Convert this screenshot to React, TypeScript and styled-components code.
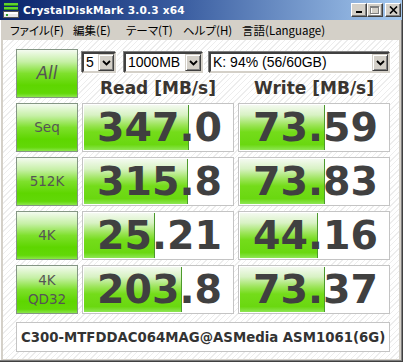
import React from 'react';
import styled, { createGlobalStyle } from 'styled-components';

const GlobalStyle = createGlobalStyle`
  html, body { margin: 0; padding: 0; background: #fff; }
  body { font-family: "DejaVu Sans", sans-serif; }
`;

const Window = styled.div`
  width: 403px;
  height: 362px;
  box-sizing: border-box;
  display: flex;
  flex-direction: column;
  background: #d4d0c8;
  border-right: 1px solid #404040;
  border-bottom: 1px solid #404040;
  box-shadow: inset -1px -1px 0 #808080, inset 1px 0 0 #fff;
`;

const TitleBar = styled.div`
  height: 20px;
  display: flex;
  align-items: center;
  padding: 0 1px 0 3px;
  background: linear-gradient(to right, #0a246a 0%, #3a5da0 45%, #a6caf0 100%);
`;

const TitleText = styled.span`
  flex: 1;
  margin-left: 4px;
  color: #fff;
  font: bold 10.6px "DejaVu Sans", sans-serif;
  letter-spacing: 0.2px;
  white-space: nowrap;
`;

const CaptionButton = styled.div<{ $gap?: number }>`
  width: 16px;
  height: 14px;
  box-sizing: border-box;
  margin-left: ${p => p.$gap ?? 0}px;
  background: #d4d0c8;
  border: 1px solid;
  border-color: #fff #404040 #404040 #fff;
  box-shadow: inset -1px -1px 0 #808080;
  display: flex;
  align-items: center;
  justify-content: center;
`;

const MenuBar = styled.div`
  height: 20px;
  display: flex;
  align-items: center;
  padding-left: 10px;
  font: 11.5px "Noto Sans CJK JP", sans-serif;
  font-feature-settings: "palt";
  color: #000;
`;

const MenuItem = styled.span<{ $w?: number }>`
  width: ${p => (p.$w ? `${p.$w}px` : 'auto')};
  white-space: nowrap;
`;

const Body = styled.div`
  flex: 1;
  margin: 0 3px 2px 3px;
  padding: 9px 0 0 13px;
  background: repeating-linear-gradient(135deg, #ffffff 0 3px, #ededed 3px 4px);
  display: flex;
  flex-direction: column;
`;

const Grid = styled.div`
  display: grid;
  grid-template-columns: 62px 152px 152px;
  grid-template-rows: repeat(5, 49px);
  column-gap: 4px;
  row-gap: 5px;
`;

const LabelButton = styled.div<{ $size?: number; $italic?: boolean }>`
  box-sizing: border-box;
  border: 1px solid #849684;
  background: linear-gradient(to bottom, #f4fbf0 0%, #c6f0a6 25%, #7ee02c 50%, #5ed600 75%, #62d808 92%, #8be64a 100%);
  color: #555;
  font-size: ${p => p.$size ?? 13.5}px;
  font-style: ${p => (p.$italic ? 'italic' : 'normal')};
  font-family: "DejaVu Sans", sans-serif;
  display: flex;
  flex-direction: column;
  align-items: center;
  justify-content: center;
  text-align: center;
  line-height: 19px;
`;

const TopCell = styled.div`
  grid-column: 2 / 4;
  display: flex;
  flex-direction: column;
`;

const SelectRow = styled.div`
  display: flex;
  margin-top: 3px;
  height: 21px;
`;

const Combo = styled.div<{ $w: number; $gap?: number }>`
  width: ${p => p.$w}px;
  margin-left: ${p => p.$gap ?? 0}px;
  box-sizing: border-box;
  background: #fff;
  border: 2px solid;
  border-color: #404040 #d4d0c8 #d4d0c8 #404040;
  box-shadow: -1px -1px 0 #808080, 1px 1px 0 #fff;
  display: flex;
  align-items: stretch;
`;

const ComboText = styled.span`
  flex: 1;
  padding-left: 2px;
  font: 14px/17px "Liberation Sans", sans-serif;
  color: #000;
  white-space: nowrap;
  overflow: hidden;
`;

const ComboArrow = styled.div`
  width: 16px;
  box-sizing: border-box;
  background: #d4d0c8;
  border: 1px solid;
  border-color: #d4d0c8 #404040 #404040 #d4d0c8;
  box-shadow: inset 1px 1px 0 #fff, inset -1px -1px 0 #808080;
  display: flex;
  align-items: center;
  justify-content: center;
`;

const HeaderRow = styled.div`
  display: grid;
  grid-template-columns: 152px 152px;
  column-gap: 4px;
  margin-top: 5px;
`;

const Header = styled.div`
  text-align: center;
  font: bold 17px/20px "DejaVu Sans", sans-serif;
  color: #3a3530;
  white-space: nowrap;
`;

const ValueCell = styled.div`
  box-sizing: border-box;
  border: 1px solid #c4c4c4;
  background: #fff;
  padding: 1px;
  display: flex;
`;

const Track = styled.div`
  flex: 1;
  display: flex;
  align-items: center;
  justify-content: center;
  padding-left: 3px;
  background-repeat: no-repeat;
  background-image:
    linear-gradient(to bottom, #f4faf0 0%, #d8f2c4 22%, #9ae456 45%, #74dc1a 60%, #6ad810 88%, #8ee654 100%),
    linear-gradient(#4c9a2c, #4c9a2c);
  font: bold 39.5px/1 "DejaVu Sans", sans-serif;
  color: #404040;
`;

const InfoBox = styled.div`
  width: 374px;
  height: 30px;
  margin-top: 8px;
  box-sizing: border-box;
  border: 1px solid #c4c4c4;
  background: #fff;
  padding-left: 4px;
  display: flex;
  align-items: center;
  font: bold 13.3px "DejaVu Sans", sans-serif;
  color: #333;
  white-space: nowrap;
`;

const Chevron = () => (
  <svg width="9" height="6" viewBox="0 0 9 6">
    <polyline points="1,1 4.5,4.5 8,1" fill="none" stroke="#000" strokeWidth="1.8" />
  </svg>
);

const DriveIcon = () => (
  <svg width="16" height="16" viewBox="0 0 16 16">
    <rect x="1" y="1" width="14" height="2" fill="#5fd32a" />
    <rect x="1" y="3" width="14" height="1" fill="#2e8f1a" />
    <rect x="1" y="5" width="14" height="2" fill="#5fd32a" />
    <rect x="1" y="7" width="14" height="1" fill="#2e8f1a" />
    <rect x="0.5" y="9.5" width="15" height="6" fill="#e8e8e8" stroke="#555" />
    <rect x="1" y="10" width="14" height="2" fill="#fff" />
    <rect x="3" y="12" width="2" height="2" fill="#2aa02a" />
  </svg>
);

type Row = { label: string[]; read: number; write: number };

const rows: Row[] = [
  { label: ['Seq'], read: 347.0, write: 73.59 },
  { label: ['512K'], read: 315.8, write: 73.83 },
  { label: ['4K'], read: 25.21, write: 44.16 },
  { label: ['4K', 'QD32'], read: 203.8, write: 73.37 },
];

const fmt = (v: number) => (v >= 100 ? v.toFixed(1) : v.toFixed(2));

const Value = ({ v }: { v: number }) => {
  const w = Math.round(29 + 30 * Math.log10(v));
  return (
    <ValueCell>
      <Track
        style={{
          backgroundSize: `${w - 1}px 100%, 1px 100%`,
          backgroundPosition: `0 0, ${w - 1}px 0`,
        }}
      >
        {fmt(v)}
      </Track>
    </ValueCell>
  );
};

const App = () => {
  return (
    <>
      <GlobalStyle />
      <Window>
        <TitleBar>
          <DriveIcon />
          <TitleText>CrystalDiskMark 3.0.3 x64</TitleText>
          <CaptionButton>
            <svg width="8" height="8" viewBox="0 0 8 8">
              <rect x="1" y="5" width="6" height="2" fill="#000" />
            </svg>
          </CaptionButton>
          <CaptionButton>
            <svg width="10" height="9" viewBox="0 0 10 9">
              <rect x="1.5" y="1.5" width="8" height="7" fill="none" stroke="#fff" />
              <rect x="0.5" y="0.5" width="8" height="7" fill="none" stroke="#808080" />
              <rect x="0.5" y="0.5" width="8" height="1.5" fill="#808080" />
            </svg>
          </CaptionButton>
          <CaptionButton $gap={2}>
            <svg width="9" height="8" viewBox="0 0 9 8">
              <path d="M1 0.5 L8 7.5 M8 0.5 L1 7.5" stroke="#000" strokeWidth="1.6" />
            </svg>
          </CaptionButton>
        </TitleBar>
        <MenuBar>
          <MenuItem $w={63}>ファイル(F)</MenuItem>
          <MenuItem $w={53}>編集(E)</MenuItem>
          <MenuItem $w={57}>テーマ(T)</MenuItem>
          <MenuItem $w={59}>ヘルプ(H)</MenuItem>
          <MenuItem>言語(Language)</MenuItem>
        </MenuBar>
        <Body>
          <Grid>
            <LabelButton $size={17} $italic>All</LabelButton>
            <TopCell>
              <SelectRow>
                <Combo $w={34}>
                  <ComboText>5</ComboText>
                  <ComboArrow><Chevron /></ComboArrow>
                </Combo>
                <Combo $w={79} $gap={8}>
                  <ComboText>1000MB</ComboText>
                  <ComboArrow><Chevron /></ComboArrow>
                </Combo>
                <Combo $w={181} $gap={6}>
                  <ComboText>K: 94% (56/60GB)</ComboText>
                  <ComboArrow><Chevron /></ComboArrow>
                </Combo>
              </SelectRow>
              <HeaderRow>
                <Header>Read [MB/s]</Header>
                <Header>Write [MB/s]</Header>
              </HeaderRow>
            </TopCell>
            {rows.map(r => (
              <React.Fragment key={r.label.join(' ')}>
                <LabelButton>
                  {r.label.map(l => (
                    <span key={l}>{l}</span>
                  ))}
                </LabelButton>
                <Value v={r.read} />
                <Value v={r.write} />
              </React.Fragment>
            ))}
          </Grid>
          <InfoBox>C300-MTFDDAC064MAG@ASMedia ASM1061(6G)</InfoBox>
        </Body>
      </Window>
    </>
  );
};

export default App;
